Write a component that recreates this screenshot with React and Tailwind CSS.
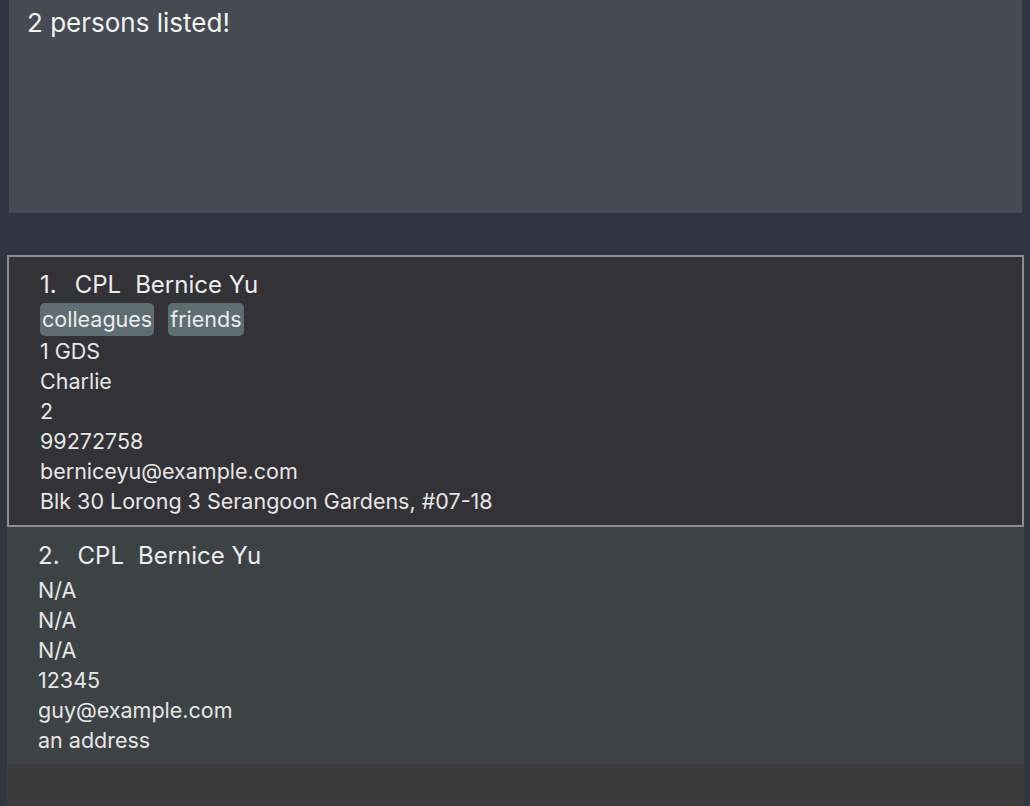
import React from 'react';

const persons = [
    {
        id: 1,
        rank: 'CPL',
        name: 'Bernice Yu',
        tags: ['colleagues', 'friends'],
        details: ['1 GDS', 'Charlie', '2', '99272758', 'berniceyu@example.com', 'Blk 30 Lorong 3 Serangoon Gardens, #07-18'],
        selected: true,
    },
    {
        id: 2,
        rank: 'CPL',
        name: 'Bernice Yu',
        tags: [],
        details: ['N/A', 'N/A', 'N/A', '12345', 'guy@example.com', 'an address'],
        selected: false,
    },
];

function NameRow({ index, person }) {
    return (
        <div className="flex h-[34px] leading-[34px] text-[24px] text-[#ececec] whitespace-pre">
            <span className="mr-[18px]">{index}.</span>
            <span className="mr-[14px]">{person.rank}</span>
            <span>{person.name}</span>
        </div>
    );
}

function PersonCard({ person, index }) {
    if (person.selected) {
        return (
            <div className="border-2 border-[#8d8b93] bg-[#333237] pl-[31px] pt-[11px] pb-[9px]">
                <NameRow index={index} person={person} />
                <div className="flex gap-[14px] mt-[1px] h-[33px]">
                    {person.tags.map((tag) => (
                        <span
                            key={tag}
                            className="bg-[#5d6d72] rounded-[5px] px-[2px] h-[33px] leading-[33px] text-[21.5px] text-[#ececec]"
                        >
                            {tag}
                        </span>
                    ))}
                </div>
                {person.details.map((line, i) => (
                    <div key={i} className="h-[30px] leading-[30px] text-[21.5px] text-[#e6e6e6]">
                        {line}
                    </div>
                ))}
            </div>
        );
    }

    return (
        <div className="bg-[#3d4245] pl-[31px] pt-[12px] pb-[9px]">
            <NameRow index={index} person={person} />
            <div className="mt-[2px]">
                {person.details.map((line, i) => (
                    <div key={i} className="h-[30px] leading-[30px] text-[21.5px] text-[#e6e6e6]">
                        {line}
                    </div>
                ))}
            </div>
        </div>
    );
}

export default function App() {
    return (
        <div
            className="w-[1030px] h-[806px] bg-[#2f3541] flex flex-col overflow-hidden"
            style={{ fontFamily: 'Inter, "Noto Sans", sans-serif' }}
        >
            <div className="ml-[9px] mr-[8px] h-[213px] bg-[#464a52] pl-[18px] pt-[4px]">
                <p className="text-[26px] leading-[38px] text-[#f2f2f2]">2 persons listed!</p>
            </div>
            <div className="mt-[42px] ml-[7px] mr-[6px] flex-1 bg-[#3c3b3b] flex flex-col">
                {persons.map((person, i) => (
                    <PersonCard key={person.id} person={person} index={i + 1} />
                ))}
            </div>
        </div>
    );
}
